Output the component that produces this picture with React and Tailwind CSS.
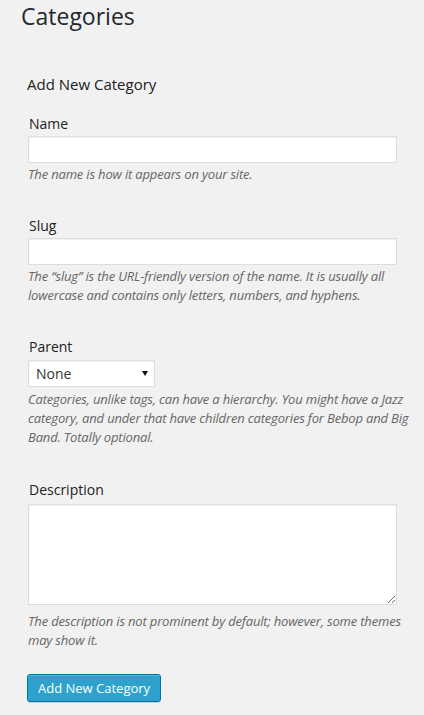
const fieldInput =
  "block h-[27px] w-[369px] border border-[#ddd] bg-white px-[6px] text-[14px] text-[#333] shadow-[inset_0_1px_2px_rgba(0,0,0,0.07)] outline-none";

function Help({ children, className = "" }) {
  return (
    <p className={`text-[13px] italic leading-[19px] tracking-[-0.17px] text-[#666] ${className}`}>{children}</p>
  );
}

function Label({ children, className = "" }) {
  return <label className={`block text-[14px] leading-[20px] text-[#222] ${className}`}>{children}</label>;
}

export default function App() {
  return (
    <div className="min-h-screen bg-[#f1f1f1] font-['Open_Sans',sans-serif] text-[#444]">
      <h1 className="pl-[21px] pt-[2px] text-[23px] font-normal leading-[29px] text-[#23282d]">Categories</h1>

      <div className="pl-[28px] pr-[8px]">
        <h3 className="mt-[43px] -ml-[1px] text-[15px] font-normal leading-[20px] text-[#222]">Add New Category</h3>

        <div className="mt-[20px]">
          <Label className="pl-[1px]">Name</Label>
          <input className={`${fieldInput} mt-[2px]`} type="text" />
          <Help className="mt-[2px]">The name is how it appears on your site.</Help>
        </div>

        <div className="mt-[32px]">
          <Label className="pl-[1px]">Slug</Label>
          <input className={`${fieldInput} mt-[2px]`} type="text" />
          <Help className="mt-[2px]">
            The “slug” is the URL-friendly version of the name. It is usually all lowercase and contains only letters,
            numbers, and hyphens.
          </Help>
        </div>

        <div className="mt-[32px]">
          <Label className="pl-[1px]">Parent</Label>
          <div className="mt-[3px] flex h-[27px] w-[127px] items-center justify-between border border-[#ddd] bg-white pl-[7px] pr-[6px] text-[14px] text-[#333] shadow-[inset_0_1px_2px_rgba(0,0,0,0.07)]">
            <span>None</span>
            <svg width="6" height="5" viewBox="0 0 6 5" className="mb-[1px]">
              <polygon points="0,0 6,0 3,5" fill="#111" />
            </svg>
          </div>
          <Help className="mt-[3px]">
            Categories, unlike tags, can have a hierarchy. You might have a Jazz category, and under that have children
            categories for Bebop and Big Band. Totally optional.
          </Help>
        </div>

        <div className="mt-[33px]">
          <Label className="pl-[1px]">Description</Label>
          <textarea
            className="mt-[4px] block h-[101px] w-[369px] border border-[#ddd] bg-white p-[4px] text-[14px] text-[#333] shadow-[inset_0_1px_2px_rgba(0,0,0,0.07)] outline-none"
            rows={5}
          />
          <Help className="mt-[7px]">
            The description is not prominent by default; however, some themes may show it.
          </Help>
        </div>

        <button
          className="mt-[24px] h-[28px] -ml-[1px] rounded-[3px] border border-[#0074a2] bg-[#2ea2cc] px-[10px] text-[13px] leading-[26px] text-white shadow-[inset_0_1px_0_rgba(120,200,230,0.5),0_1px_0_rgba(0,0,0,0.15)]"
          type="button"
        >
          Add New Category
        </button>
      </div>
    </div>
  );
}
